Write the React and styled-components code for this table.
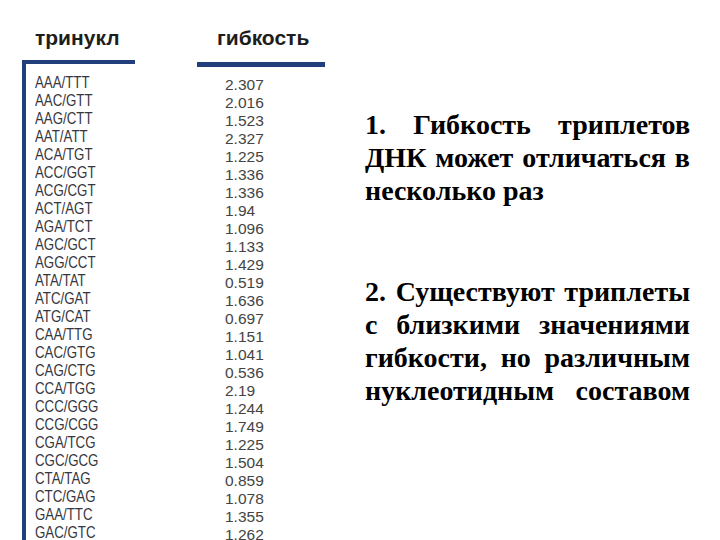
import React from 'react';
import styled, {createGlobalStyle} from 'styled-components';

const rows=[
  ['AAA/TTT','2.307'],['AAC/GTT','2.016'],['AAG/CTT','1.523'],['AAT/ATT','2.327'],
  ['ACA/TGT','1.225'],['ACC/GGT','1.336'],['ACG/CGT','1.336'],['ACT/AGT','1.94'],
  ['AGA/TCT','1.096'],['AGC/GCT','1.133'],['AGG/CCT','1.429'],['ATA/TAT','0.519'],
  ['ATC/GAT','1.636'],['ATG/CAT','0.697'],['CAA/TTG','1.151'],['CAC/GTG','1.041'],
  ['CAG/CTG','0.536'],['CCA/TGG','2.19'],['CCC/GGG','1.244'],['CCG/CGG','1.749'],
  ['CGA/TCG','1.225'],['CGC/GCG','1.504'],['CTA/TAG','0.859'],['CTC/GAG','1.078'],
  ['GAA/TTC','1.355'],['GAC/GTC','1.262'],
];

const App=()=>{
  return (
    <>
      <Global/>
      <Slide>
        <TableSide>
          <Column width={175}>
            <Head>тринукл</Head>
            <Frame side>
              {rows.map(r=><Label key={r[0]}>{r[0]}</Label>)}
            </Frame>
          </Column>
          <Column width={128}>
            <Head indent={20}>гибкость</Head>
            <Frame>
              {rows.map((r,i)=><Value key={i}>{r[1]}</Value>)}
            </Frame>
          </Column>
        </TableSide>
        <TextSide>
          <Para>
            <Line>1. Гибкость триплетов</Line>
            <Line>ДНК может отличаться в</Line>
            <Line end>несколько раз</Line>
          </Para>
          <Para>
            <Line>2. Существуют триплеты</Line>
            <Line>с близкими значениями</Line>
            <Line>гибкости, но различным</Line>
            <Line>нуклеотидным составом</Line>
          </Para>
        </TextSide>
      </Slide>
    </>
  )
}
export default App;

const Global=createGlobalStyle`
html,body{
  margin:0;
  padding:0;
  background:#fff;
  overflow:hidden;
}
`
const Slide=styled.div`
width:720px;
height:540px;
overflow:hidden;
display:flex;
background:#fff;
`
const TableSide=styled.div`
width:343px;
padding-left:22px;
padding-top:26px;
display:flex;
flex-shrink:0;
`
const Column=styled.div`
width:${p=>p.width}px;
display:flex;
flex-direction:column;
`
const Head=styled.div`
font-family:"Liberation Sans",Arial,sans-serif;
font-weight:700;
font-size:21px;
line-height:24px;
height:24px;
color:#1d1d1d;
padding-left:${p=>p.indent||13}px;
margin-bottom:10px;
`
const Frame=styled.div`
border-top:${p=>p.side?4:5}px solid #223f7b;
border-left:${p=>p.side?'4px solid #223f7b':'none'};
width:${p=>p.side?113:128}px;
box-sizing:border-box;
margin-top:${p=>p.side?0:2}px;
padding-top:${p=>p.side?10:9}px;
padding-left:${p=>p.side?9:28}px;
flex:1;
`
const Label=styled.div`
font-family:"Liberation Sans",Arial,sans-serif;
font-size:16px;
line-height:18px;
color:#363640;
white-space:nowrap;
transform:scaleX(0.83);
transform-origin:left center;
`
const Value=styled.div`
font-family:"Liberation Sans",Arial,sans-serif;
font-size:15.5px;
line-height:18px;
color:#444;
`
const TextSide=styled.div`
width:325px;
padding-top:108px;
`
const Para=styled.div`
margin:0 0 68px 0;
font-family:"Liberation Serif","Times New Roman",serif;
font-weight:700;
font-size:28px;
line-height:33px;
color:#000;
`
const Line=styled.div`
white-space:nowrap;
text-align:${p=>p.end?'left':'justify'};
text-align-last:${p=>p.end?'left':'justify'};
`
